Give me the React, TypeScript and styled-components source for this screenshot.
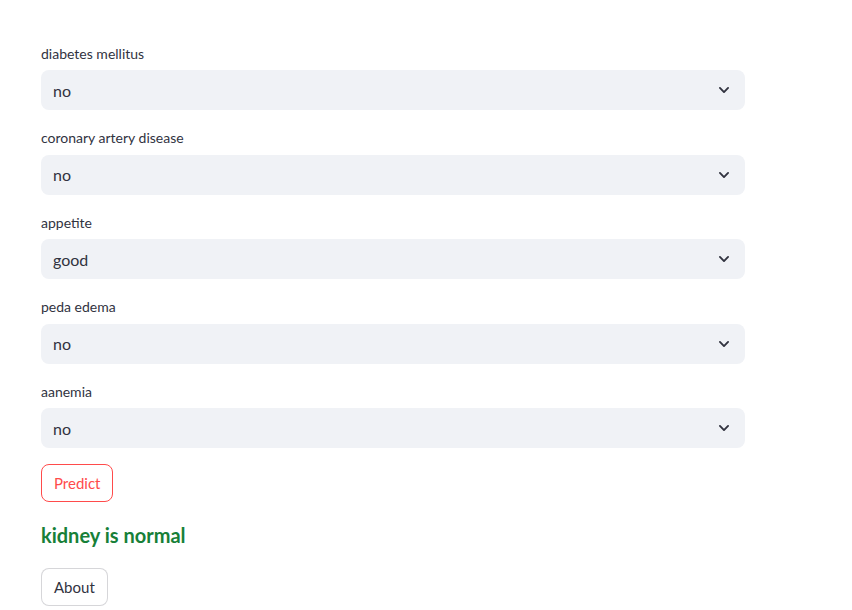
import styled, { createGlobalStyle } from "styled-components";

const GlobalStyle = createGlobalStyle`
  body {
    margin: 0;
    background: #ffffff;
    font-family: "Source Sans Pro", Lato, "Noto Sans", sans-serif;
    color: rgb(49, 51, 63);
  }
`;

const Page = styled.main`
  display: flex;
  flex-direction: column;
  gap: 16px;
  width: 704px;
  padding: 41.5px 0 0 41px;
`;

const Field = styled.div`
  display: flex;
  flex-direction: column;
`;

const Label = styled.label`
  font-size: 14px;
  line-height: 24px;
  height: 24px;
  margin-bottom: 4.5px;
  color: rgb(49, 51, 63);
`;

const SelectBox = styled.div`
  display: flex;
  align-items: center;
  justify-content: space-between;
  height: 40px;
  padding: 0 14px 0 12px;
  box-sizing: border-box;
  background: rgb(240, 242, 246);
  border-radius: 8px;
  font-size: 16px;
  color: rgb(49, 51, 63);
`;

const Chevron = styled.svg`
  width: 14px;
  height: 14px;
  display: block;
`;

const Button = styled.button<{ $primary?: boolean }>`
  align-self: flex-start;
  height: 38px;
  padding: 0 12px;
  border-radius: 8px;
  background: #ffffff;
  font-family: inherit;
  font-size: 15px;
  border: 1px solid
    ${(p) => (p.$primary ? "rgb(255, 75, 75)" : "rgba(49, 51, 63, 0.2)")};
  color: ${(p) => (p.$primary ? "rgb(255, 75, 75)" : "rgb(49, 51, 63)")};
  cursor: pointer;
`;

const Result = styled.h3`
  margin: 0;
  font-size: 20px;
  line-height: 34px;
  font-weight: 700;
  color: rgb(23, 128, 56);
`;

const fields = [
  { label: "diabetes mellitus", value: "no" },
  { label: "coronary artery disease", value: "no" },
  { label: "appetite", value: "good" },
  { label: "peda edema", value: "no" },
  { label: "aanemia", value: "no" },
];

function Select({ label, value }: { label: string; value: string }) {
  return (
    <Field>
      <Label>{label}</Label>
      <SelectBox>
        <span>{value}</span>
        <Chevron viewBox="0 0 24 24">
          <path
            d="M5 8.5l7 7 7-7"
            fill="none"
            stroke="rgb(49, 51, 63)"
            strokeWidth="3.2"
            strokeLinecap="round"
            strokeLinejoin="round"
          />
        </Chevron>
      </SelectBox>
    </Field>
  );
}

export default function App() {
  return (
    <>
      <GlobalStyle />
      <Page>
        {fields.map((f) => (
          <Select key={f.label} label={f.label} value={f.value} />
        ))}
        <Button $primary>Predict</Button>
        <Result>kidney is normal</Result>
        <Button>About</Button>
      </Page>
    </>
  );
}
